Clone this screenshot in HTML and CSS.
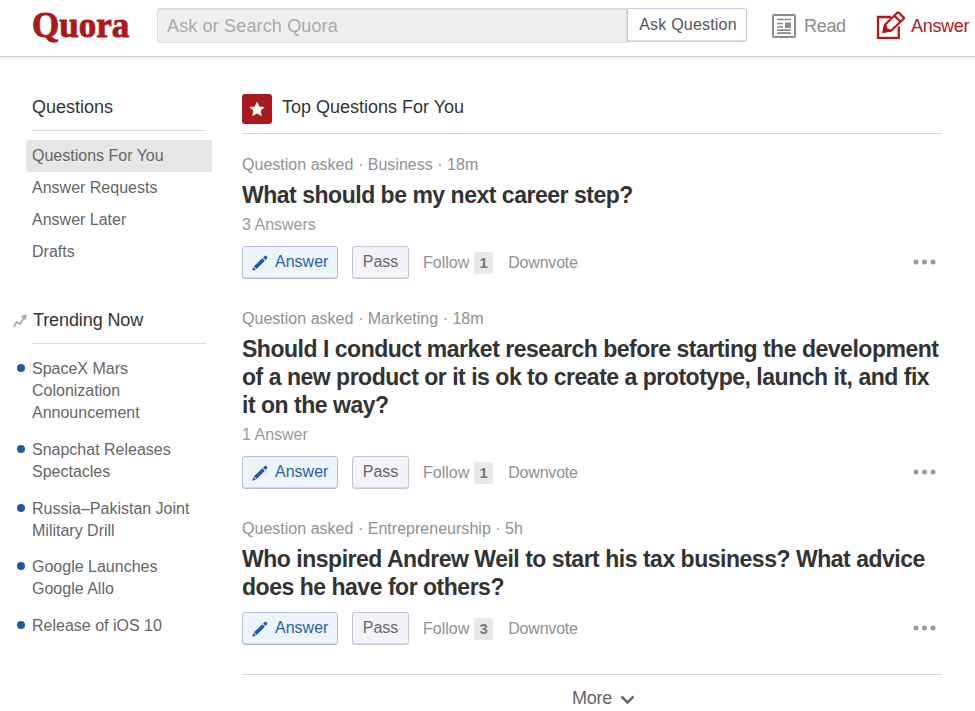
FILE: index.html
```html
<!DOCTYPE html>
<html lang="en">
<head>
<meta charset="utf-8">
<title>Quora</title>
<link rel="stylesheet" href="styles.css">
</head>
<body>
<svg width="0" height="0" class="sprites" aria-hidden="true">
  <symbol id="pencil" viewBox="0 0 16 16"><path d="M.3 15.700 1.300 12l2.700 2.600zM1.900 11.300 10.400 3.200l2.500 2.500L4.600 13.900zM11.100 2.500 12.800.900q.8-.6 1.500.1l.8.800q.7.700 0 1.400L13.600 5z"/></symbol>
  <symbol id="dots" viewBox="0 0 24 6"><circle cx="3" cy="3" r="2.500"/><circle cx="11.500" cy="3" r="2.500"/><circle cx="20" cy="3" r="2.500"/></symbol>
</svg>
<header class="header">
  <a class="logo">Quora</a>
  <div class="search">Ask or Search Quora</div>
  <button class="ask">Ask Question</button>
  <a class="nav read">
    <svg width="24" height="24" viewBox="0 0 24 24" fill="none" stroke="currentColor" stroke-width="1.700"><rect x="1" y="1" width="22" height="22" rx="1" stroke-width="2"/><path d="M5 5.500h14M5 9.500h6M5 13h6M5 16.200h14M5 19.200h14"/><path d="M13 8.500h6v5.500h-6z" fill="currentColor" stroke="none"/></svg>
    <span>Read</span>
  </a>
  <a class="nav answer">
    <svg width="30" height="29" viewBox="0 0 30 29" fill="none" stroke="currentColor" stroke-width="2.300"><path d="M15 6H2v20.800h20.800V15.500"/><path d="M7.500 20.800l1.500-7L21.200 1.800q.8-.8 1.600 0L27.500 6.400q.8.800 0 1.600L15 19.800zM18.500 4.800l6 6" stroke-width="2.200"/><path d="M6.500 22l1.500-7.500 2.500-.5 1 3.500 3.500 1-.5 2z" fill="currentColor" stroke="none"/></svg>
    <span>Answer</span>
  </a>
</header>
<div class="page">
  <aside class="side">
    <h2 class="side-title">Questions</h2>
    <nav class="menu">
      <a class="active">Questions For You</a>
      <a>Answer Requests</a>
      <a>Answer Later</a>
      <a>Drafts</a>
    </nav>
    <h2 class="side-title trending"><svg width="14" height="14" viewBox="0 0 14 14" fill="none" stroke="#aaaab2" stroke-width="1.700"><path d="M1 13l2.500-5 3.500 2L11.500 3"/><path d="M7.500 2 13.500.5l-.5 6z" fill="#aaaab2" stroke="none"/></svg>Trending Now</h2>
    <ul class="topics">
      <li>SpaceX Mars<br>Colonization<br>Announcement</li>
      <li>Snapchat Releases<br>Spectacles</li>
      <li>Russia–Pakistan Joint<br>Military Drill</li>
      <li>Google Launches<br>Google Allo</li>
      <li>Release of iOS 10</li>
    </ul>
  </aside>
  <main class="feed">
    <div class="feed-title">
      <span class="star"><svg width="16" height="16" viewBox="0 0 16 16" fill="#fff"><path d="M8 .5 10.300 5.500 15.700 6.100 11.700 9.800 12.800 15.200 8 12.500 3.200 15.200 4.300 9.800.3 6.100 5.700 5.500z"/></svg></span>
      <h1>Top Questions For You</h1>
    </div>
    <article class="question">
      <p class="meta">Question asked · Business · 18m</p>
      <h3>What should be my next career step?</h3>
      <p class="count">3 Answers</p>
      <div class="actions">
        <button class="btn primary"><svg width="16" height="16"><use href="#pencil"/></svg>Answer</button>
        <button class="btn">Pass</button>
        <span class="follow">Follow</span><b class="badge">1</b><span class="down">Downvote</span>
        <svg class="dots" width="24" height="6"><use href="#dots"/></svg>
      </div>
    </article>
    <article class="question">
      <p class="meta">Question asked · Marketing · 18m</p>
      <h3>Should I conduct market research before starting the development<br>of a new product or it is ok to create a prototype, launch it, and fix<br>it on the way?</h3>
      <p class="count">1 Answer</p>
      <div class="actions">
        <button class="btn primary"><svg width="16" height="16"><use href="#pencil"/></svg>Answer</button>
        <button class="btn">Pass</button>
        <span class="follow">Follow</span><b class="badge">1</b><span class="down">Downvote</span>
        <svg class="dots" width="24" height="6"><use href="#dots"/></svg>
      </div>
    </article>
    <article class="question">
      <p class="meta">Question asked · Entrepreneurship · 5h</p>
      <h3>Who inspired Andrew Weil to start his tax business? What advice<br>does he have for others?</h3>
      <div class="actions">
        <button class="btn primary"><svg width="16" height="16"><use href="#pencil"/></svg>Answer</button>
        <button class="btn">Pass</button>
        <span class="follow">Follow</span><b class="badge">3</b><span class="down">Downvote</span>
        <svg class="dots" width="24" height="6"><use href="#dots"/></svg>
      </div>
    </article>
    <div class="more">More<svg width="15" height="10" viewBox="0 0 15 10" fill="none" stroke="#666" stroke-width="2.500"><path d="M1.500 1.500l6 6 6-6"/></svg></div>
  </main>
</div>
</body>
</html>
```
FILE: styles.css
```css
* { box-sizing: border-box; }
body { margin: 0; height: 711px; overflow: hidden; background: #fff; color: #333; font-family: "Liberation Sans", Arial, sans-serif; font-size: 16px; }
h1, h2, h3, p, ul { margin: 0; padding: 0; font-weight: normal; }
svg { display: block; flex: none; }
.sprites { position: absolute; }
button { font: inherit; padding: 0; }

.header { display: flex; align-items: flex-start; height: 57px; padding: 8px 0 0 32px; border-bottom: 1px solid #d2d2d2; box-shadow: 0 1px 2px #e6e6e6; white-space: nowrap; }
.logo { width: 125px; height: 36px; font: bold 35px/35px "Liberation Serif", serif; color: #a91a1e; -webkit-text-stroke: .9px #a91a1e; }
.search { width: 470px; height: 35px; padding-left: 9px; border: 1px solid #ddd; border-top-width: 2px; border-radius: 2px 0 0 2px; background: #efefef; color: #aaa; font-size: 18px; line-height: 32px; letter-spacing: .15px; }
.ask { width: 120px; height: 34px; padding-left: 2px; border: 1px solid #c8c8e0; border-radius: 0 3px 3px 0; box-shadow: inset 0 -1px #dcdcec; background: #fff; color: #555; letter-spacing: .2px; line-height: 30px; }
.nav { display: flex; font-size: 18px; line-height: 36px; letter-spacing: -.3px; }
.read { width: 104px; margin-left: 25px; gap: 8px; color: #8c8c8c; }
.read svg { margin-top: 6px; }
.answer { gap: 5px; color: #b2191e; }
.answer svg { margin-top: 3px; }

.page { display: flex; }
.side { width: 242px; padding: 39px 36px 0 32px; }
.side-title { height: 35px; border-bottom: 1px solid #dcdcdc; font-size: 18px; line-height: 23px; color: #333; white-space: nowrap; }
.menu { display: flex; flex-direction: column; margin: 9px -6px 0; }
.menu a { height: 32px; padding-left: 6px; border-radius: 3px; line-height: 32px; color: #666; }
.menu .active { background: #e6e6e6; }
.trending { display: flex; gap: 6px; margin-top: 41px; letter-spacing: -.1px; }
.trending svg { margin: 5px 0 0 -19px; }
.topics { list-style: none; margin-top: 14px; color: #666; line-height: 22px; white-space: nowrap; }
.topics li { position: relative; margin-bottom: 14.8px; }
.topics li::before { content: ""; position: absolute; left: -15px; top: 6px; width: 8px; height: 8px; border-radius: 50%; background: #1f59a4; }

.feed { width: 700px; padding-top: 37px; }
.feed-title { display: flex; gap: 10px; height: 40px; border-bottom: 1px solid #d9d9d9; }
.feed-title h1 { font-size: 18px; line-height: 27px; color: #333; }
.star { display: flex; align-items: center; justify-content: center; width: 30px; height: 30px; border-radius: 3px; background: #a91a1e; }
.question { padding-top: 20px; margin-bottom: 9px; }
.meta { height: 27px; color: #919191; line-height: 21px; letter-spacing: .02px; }
h3 { font-weight: bold; font-size: 23px; line-height: 28px; letter-spacing: -.48px; white-space: nowrap; }
.count { height: 21px; color: #999; line-height: 22px; margin-top: 5px; }
.actions { display: flex; align-items: center; height: 33px; margin-top: 11px; color: #919191; }
.btn { width: 57px; height: 33px; border: 1px solid #c6c3d7; border-radius: 3px; box-shadow: inset 0 -1px #dddbe8; background: #f4f4f8; color: #666; line-height: 29px; padding-bottom: 2px; }
.primary { display: flex; align-items: center; gap: 7px; width: 96px; padding-left: 9px; margin-right: 14px; border-color: #aebfdc; box-shadow: inset 0 -1px #cddaeb; background: #edf5fb; color: #2b5fa8; fill: #1f59a4; }
.primary svg { margin-top: 2px; }
.follow { margin-left: 14px; }
.badge { width: 19px; height: 22px; margin: 1px 15px 0 5px; border-radius: 2px; background: #e8e8e8; color: #777; font-size: 15px; line-height: 22px; text-align: center; }
.down { letter-spacing: -.2px; }
.dots { margin: 0 5px 2px auto; fill: #999; }
.more { display: flex; justify-content: center; align-items: flex-start; gap: 8px; margin-top: 29px; padding: 11px 0 0 23px; border-top: 1px solid #d9d9d9; font-size: 18px; line-height: 24px; letter-spacing: -.2px; color: #666; }
.more svg { margin-top: 9px; }
```
